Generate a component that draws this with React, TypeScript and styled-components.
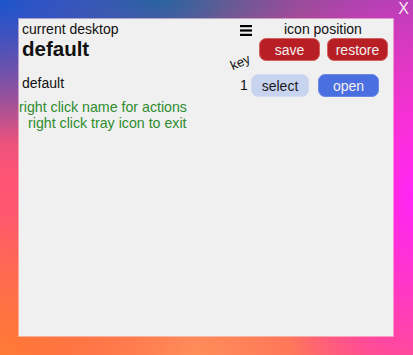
import styled, { createGlobalStyle } from "styled-components";

const GlobalStyle = createGlobalStyle`
  html, body {
    margin: 0;
    padding: 0;
  }
  body {
    font-family: "Liberation Sans", Arial, sans-serif;
  }
`;

const Desktop = styled.div`
  width: 413px;
  height: 355px;
  box-sizing: border-box;
  overflow: hidden;
  display: flex;
  flex-direction: column;
  background:
    radial-gradient(ellipse 55% 40% at 0% 0%, #1b55cc 0%, rgba(27, 85, 204, 0) 100%),
    radial-gradient(ellipse 35% 18% at 38% 0%, #2f6a8e 0%, rgba(47, 106, 142, 0) 100%),
    radial-gradient(ellipse 35% 80% at 100% 55%, #ff24f6 0%, rgba(255, 36, 246, 0) 100%),
    radial-gradient(ellipse 45% 40% at 0% 100%, #ff7a34 0%, rgba(255, 122, 52, 0) 100%),
    radial-gradient(ellipse 40% 30% at 48% 100%, #ff8e58 0%, rgba(255, 142, 88, 0) 100%),
    linear-gradient(180deg, #9a4a9c 0%, #ff5474 50%, #ff6658 100%);
`;

const TitleBar = styled.div`
  height: 19px;
  display: flex;
  justify-content: flex-end;
  align-items: flex-start;
  padding-right: 4px;
`;

const Close = styled.span`
  color: #fbe6f6;
  font-size: 16px;
  line-height: 19px;
  margin-top: -1px;
`;

const Panel = styled.div`
  margin-left: 19px;
  width: 374px;
  height: 317px;
  background: #f0f0f0;
  box-shadow: 0 0 0 1px rgba(255, 225, 225, 0.55);
  display: grid;
  grid-template-columns: 210px 1fr;
  align-items: start;
  font-size: 14px;
  color: #111;
`;

const Info = styled.div`
  display: flex;
  flex-direction: column;
  padding-top: 2px;
`;

const Line = styled.div<{ $indent?: number; $gap?: number }>`
  line-height: 16px;
  padding-left: ${p => p.$indent ?? 3}px;
  margin-top: ${p => p.$gap ?? 0}px;
  white-space: nowrap;
`;

const Current = styled.div`
  font-size: 20.5px;
  font-weight: 700;
  line-height: 24px;
  padding-left: 3px;
`;

const Hint = styled(Line)`
  color: #2f8c2f;
  font-size: 14.2px;
`;

const Controls = styled.div`
  display: flex;
  flex-direction: column;
  padding-top: 2px;
`;

const Row = styled.div<{ $gap?: number; $top?: number }>`
  display: flex;
  align-items: center;
  gap: ${p => p.$gap ?? 0}px;
  margin-top: ${p => p.$top ?? 0}px;
`;

const Menu = styled.svg`
  margin-left: 11px;
  margin-top: 1px;
`;

const Heading = styled.div`
  line-height: 17px;
  margin-left: 32px;
  white-space: nowrap;
`;

const Key = styled.span`
  display: inline-block;
  width: 23px;
  font-size: 13px;
  transform: translate(1px, 12px) rotate(-24deg);
`;

const Button = styled.button<{ $tone: "red" | "pale" | "blue"; $w: number; $left?: number }>`
  width: ${p => p.$w}px;
  height: 23px;
  margin-left: ${p => p.$left ?? 0}px;
  border-radius: 7px;
  border: 1px solid
    ${p => (p.$tone === "red" ? "#d46060" : p.$tone === "blue" ? "#6d8ae6" : "#d4ddf2")};
  background: ${p => (p.$tone === "red" ? "#b71f24" : p.$tone === "blue" ? "#4a6fe0" : "#c8d3f0")};
  color: ${p => (p.$tone === "pale" ? "#1a1a1a" : "#f4f0f0")};
  font-family: "Liberation Sans", Arial, sans-serif;
  font-size: 14px;
  padding: 0;
  line-height: 20px;
`;

const Count = styled.span`
  margin-left: 11px;
  width: 11px;
  line-height: 23px;
`;

export default function App() {
  return (
    <>
      <GlobalStyle />
      <Desktop>
        <TitleBar>
          <Close>X</Close>
        </TitleBar>
        <Panel>
          <Info>
            <Line>current desktop</Line>
            <Current>default</Current>
            <Line $gap={14}>default</Line>
            <Hint $indent={0} $gap={8}>right click name for actions</Hint>
            <Hint $indent={9}>right click tray icon to exit</Hint>
          </Info>
          <Controls>
            <Row>
              <Menu width="12" height="11" viewBox="0 0 12 11">
                <rect x="0" y="0" width="12" height="2.2" fill="#000" />
                <rect x="0" y="4.4" width="12" height="2.2" fill="#000" />
                <rect x="0" y="8.8" width="12" height="2.2" fill="#000" />
              </Menu>
              <Heading>icon position</Heading>
            </Row>
            <Row $gap={7}>
              <Key>key</Key>
              <Button $tone="red" $w={61}>save</Button>
              <Button $tone="red" $w={61}>restore</Button>
            </Row>
            <Row $top={13}>
              <Count>1</Count>
              <Button $tone="pale" $w={58}>select</Button>
              <Button $tone="blue" $w={61} $left={9}>open</Button>
            </Row>
          </Controls>
        </Panel>
      </Desktop>
    </>
  );
}
